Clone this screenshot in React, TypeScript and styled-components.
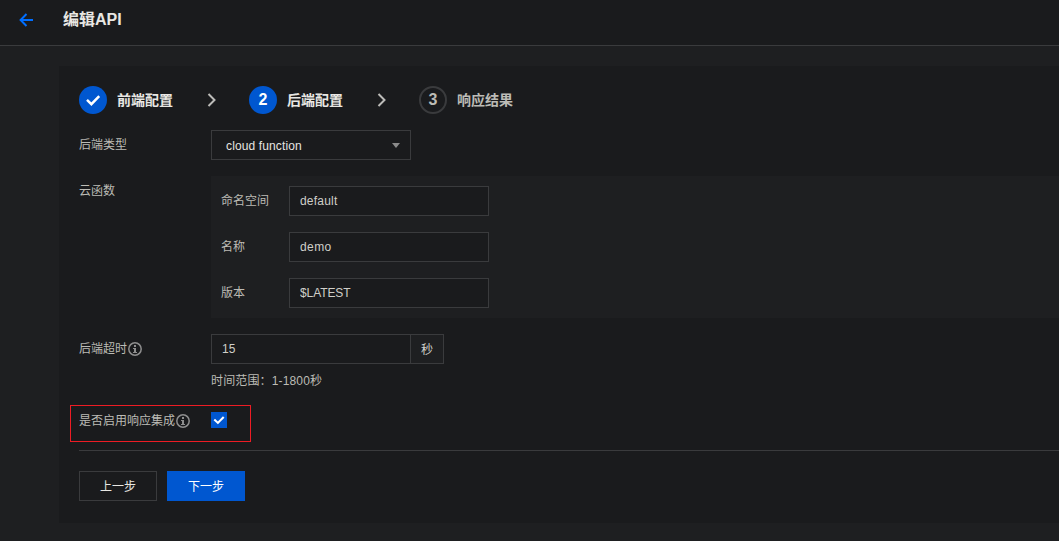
import React from "react";
import styled, { createGlobalStyle, css } from "styled-components";

const line = "#3a3b3d";

const GlobalStyle = createGlobalStyle`
  * { box-sizing: border-box; }
  body {
    margin: 0;
    background: #1e1f21;
    color: #bcbbb5;
    font: 12px/20px "Liberation Sans", "Noto Sans CJK SC", sans-serif;
    overflow: hidden;
  }
  svg { display: block; flex: none; }
`;

const Page = styled.div`
  height: 541px;
  overflow: hidden;
`;

const Header = styled.header`
  display: flex;
  align-items: center;
  gap: 29px;
  height: 46px;
  padding: 0 0 6px 19px;
  background: #1a1b1d;
  border-bottom: 1px solid ${line};
`;

const Title = styled.h1`
  margin: 0;
  color: #e8e7e3;
  font-size: 16px;
  line-height: 24px;
`;

const Card = styled.main`
  height: 457px;
  margin: 20px 0 0 59px;
  padding: 20px 0 0 20px;
  background: #1a1b1d;
`;

const Steps = styled.ol`
  display: flex;
  list-style: none;
  margin: 0 0 16px;
  padding: 0;
`;

const Step = styled.li<{ $muted?: boolean }>`
  display: flex;
  align-items: center;
  width: 170px;
  height: 28px;
  color: ${(p) => (p.$muted ? "#bcbbb6" : "#e8e7e3")};
  font-size: 14px;
  font-weight: 700;
`;

const StepMark = styled.span<{ $active?: boolean }>`
  display: flex;
  align-items: center;
  justify-content: center;
  width: 28px;
  height: 28px;
  margin-right: 10px;
  border-radius: 50%;
  font-size: 16px;
  ${(p) =>
    p.$active
      ? css`background: #0057d0; color: #fff;`
      : css`border: 2px solid ${line};`}
`;

const StepArrow = styled.span`
  margin-left: 34px;
`;

const Row = styled.div<{ $gap?: number }>`
  display: flex;
  margin-bottom: ${(p) => p.$gap ?? 16}px;
`;

const Label = styled.div<{ $top?: number }>`
  display: flex;
  align-items: center;
  width: 132px;
  height: 20px;
  flex: none;
  margin-top: ${(p) => p.$top ?? 5}px;
`;

const SubLabel = styled(Label)`
  width: 68px;
`;

const box = css`
  height: 30px;
  border: 1px solid ${line};
  background: #1a1b1d;
`;

const Select = styled.div`
  ${box}
  display: flex;
  align-items: center;
  justify-content: space-between;
  width: 200px;
  padding: 1px 10px 0 14px;
  color: #e6e5e1;
  letter-spacing: 0.13px;
`;

const Input = styled.input<{ $spacing?: number }>`
  ${box}
  width: 200px;
  padding: 0 10px;
  color: #d0cfc9;
  font: inherit;
  letter-spacing: ${(p) => p.$spacing ?? 0}px;
  outline: none;
  border-radius: 0;
`;

const Unit = styled.span`
  ${box}
  display: flex;
  align-items: center;
  justify-content: center;
  width: 33px;
  padding-top: 2px;
  border-left: 0;
  background: #1e1f21;
  color: #d0cfc9;
`;

const Group = styled.section`
  flex: 1;
  height: 142px;
  padding: 10px;
  background: #1e1f21;
`;

const Hint = styled.p`
  margin: 7px 0 0;
  letter-spacing: 0.15px;
`;

const Highlight = styled.div`
  display: flex;
  align-items: flex-start;
  width: 181px;
  height: 37px;
  margin: 0 0 8px -9px;
  padding: 5px 0 0 8px;
  border: 1px solid #ed1c24;
`;

const Checkbox = styled.span`
  display: flex;
  align-items: center;
  justify-content: center;
  width: 16px;
  height: 16px;
  margin-top: 1px;
  background: #0057d0;
`;

const Actions = styled.footer`
  display: flex;
  gap: 10px;
  padding-top: 20px;
  border-top: 1px solid ${line};
`;

const Button = styled.button<{ $primary?: boolean }>`
  width: 78px;
  height: 30px;
  padding: 2px 0 0;
  border: 1px solid ${(p) => (p.$primary ? "#0057d0" : line)};
  background: ${(p) => (p.$primary ? "#0057d0" : "transparent")};
  color: ${(p) => (p.$primary ? "#fff" : "#e8e7e3")};
  font: inherit;
`;

const BackIcon = () => (
  <svg width="15" height="14" viewBox="0 0 15 14" fill="none" stroke="#006eff" strokeWidth="2">
    <path d="M7.5 1 1.6 7l5.9 6M1.8 7H14" />
  </svg>
);

const StepCheckIcon = () => (
  <svg width="16" height="16" viewBox="0 0 16 16" fill="none" stroke="#fff" strokeWidth="2.5">
    <path d="M2 7.9 6.4 12.2 14.2 4.2" />
  </svg>
);

const BoxCheckIcon = () => (
  <svg width="16" height="16" viewBox="0 0 16 16" fill="none" stroke="#fff" strokeWidth="2.1">
    <path d="M3.3 7.6 6.9 10.9 12.7 5.1" />
  </svg>
);

const ChevronIcon = () => (
  <svg width="10" height="14" viewBox="0 0 10 14" fill="none" stroke="#bcbcb9" strokeWidth="2">
    <path d="M1.5 1 7.5 7l-6 6" />
  </svg>
);

const CaretIcon = () => (
  <svg width="8" height="5" viewBox="0 0 8 5" fill="#8b8b8b">
    <path d="M0 0h8L4 5z" />
  </svg>
);

const InfoIcon = () => (
  <svg width="16" height="16" viewBox="0 0 16 16">
    <circle cx="8" cy="8" r="6.2" fill="none" stroke="#8e8e8e" strokeWidth="1.5" />
    <path fill="#8e8e8e" d="M7 4h2v2H7zM6 7h3v4h1v1H6v-1h1V8H6z" />
  </svg>
);

const functionFields = [
  { name: "命名空间", value: "default", spacing: 0.2 },
  { name: "名称", value: "demo", spacing: 0.4 },
  { name: "版本", value: "$LATEST", spacing: -0.1 },
];

export default function App() {
  return (
    <Page>
      <GlobalStyle />
      <Header>
        <BackIcon />
        <Title>编辑API</Title>
      </Header>
      <Card>
        <Steps>
          <Step>
            <StepMark $active><StepCheckIcon /></StepMark>
            前端配置
            <StepArrow><ChevronIcon /></StepArrow>
          </Step>
          <Step>
            <StepMark $active>2</StepMark>
            后端配置
            <StepArrow><ChevronIcon /></StepArrow>
          </Step>
          <Step $muted>
            <StepMark>3</StepMark>
            响应结果
          </Step>
        </Steps>
        <Row>
          <Label>后端类型</Label>
          <Select>cloud function <CaretIcon /></Select>
        </Row>
        <Row>
          <Label>云函数</Label>
          <Group>
            {functionFields.map((field) => (
              <Row key={field.name}>
                <SubLabel>{field.name}</SubLabel>
                <Input defaultValue={field.value} $spacing={field.spacing} />
              </Row>
            ))}
          </Group>
        </Row>
        <Row $gap={14}>
          <Label>后端超时<InfoIcon /></Label>
          <div>
            <Row $gap={0}>
              <Input defaultValue="15" $spacing={0.2} />
              <Unit>秒</Unit>
            </Row>
            <Hint>时间范围：1-1800秒</Hint>
          </div>
        </Row>
        <Highlight>
          <Label $top={0}>是否启用响应集成<InfoIcon /></Label>
          <Checkbox><BoxCheckIcon /></Checkbox>
        </Highlight>
        <Actions>
          <Button>上一步</Button>
          <Button $primary>下一步</Button>
        </Actions>
      </Card>
    </Page>
  );
}
